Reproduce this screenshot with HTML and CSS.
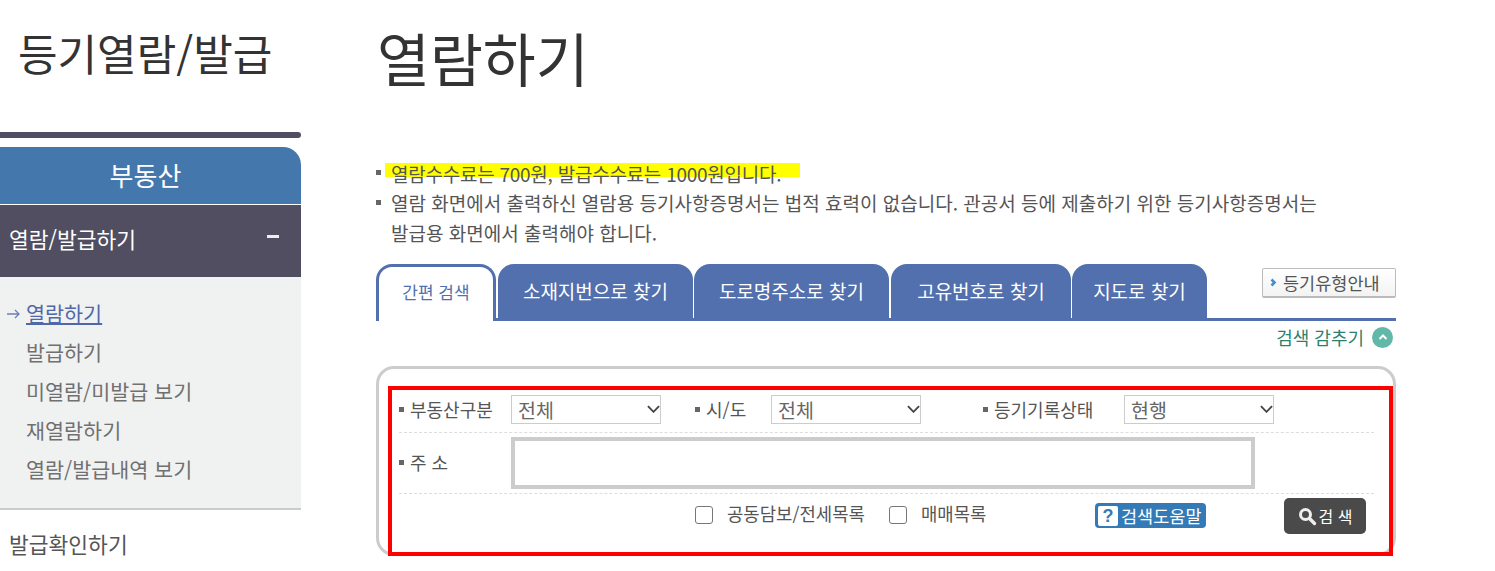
FILE: index.html
```html
<!DOCTYPE html>
<html lang="ko">
<head>
<meta charset="utf-8">
<title>열람하기</title>
<link rel="stylesheet" href="styles.css">
</head>
<body>
<div class="page">
  <aside class="side">
    <h2 class="side-title">등기열람/발급</h2>
    <div class="side-bar"></div>
    <div class="side-head">부동산</div>
    <div class="side-open"><span>열람/발급하기</span><i class="minus"></i></div>
    <ul class="side-sub">
      <li class="on">
        <svg class="arrow" width="14" height="10" viewBox="0 0 14 10"><path d="M0 5h12M8 1l4 4-4 4" fill="none" stroke="#6d7fb5" stroke-width="1.3"/></svg>
        <a>열람하기</a>
      </li>
      <li><a>발급하기</a></li>
      <li><a>미열람/미발급 보기</a></li>
      <li><a>재열람하기</a></li>
      <li><a>열람/발급내역 보기</a></li>
    </ul>
    <div class="side-next">발급확인하기</div>
  </aside>
  <main class="main">
    <h1 class="title">열람하기</h1>
    <ul class="notes">
      <li class="hl"><span class="marker"></span>열람수수료는 700원, 발급수수료는 1000원입니다.</li>
      <li>열람 화면에서 출력하신 열람용 등기사항증명서는 법적 효력이 없습니다. 관공서 등에 제출하기 위한 등기사항증명서는<br>발급용 화면에서 출력해야 합니다.</li>
    </ul>
    <div class="tabs">
      <a class="tab first">간편 검색</a>
      <a class="tab t2">소재지번으로 찾기</a>
      <a class="tab t3">도로명주소로 찾기</a>
      <a class="tab t4">고유번호로 찾기</a>
      <a class="tab t5">지도로 찾기</a>
      <a class="guide"><svg width="7" height="9" viewBox="0 0 7 9"><path d="M1.500 1.500l3 3-3 3" fill="none" stroke="#3f8fd0" stroke-width="2.600"/></svg>등기유형안내</a>
    </div>
    <div class="hide-row">검색 감추기<span class="circle"><svg width="10" height="6" viewBox="0 0 10 6"><path d="M1.5 5L5 1.5 8.500 5" fill="none" stroke="#fff" stroke-width="2"/></svg></span></div>
    <section class="box">
      <div class="annot"></div>
      <div class="row r1">
        <label class="lab l1">부동산구분</label>
        <div class="sel s1">전체<svg width="14" height="8" viewBox="0 0 14 8"><path d="M1 1l6 6 6-6" fill="none" stroke="#444" stroke-width="2"/></svg></div>
        <label class="lab l2">시/도</label>
        <div class="sel s2">전체<svg width="14" height="8" viewBox="0 0 14 8"><path d="M1 1l6 6 6-6" fill="none" stroke="#444" stroke-width="2"/></svg></div>
        <label class="lab l3">등기기록상태</label>
        <div class="sel s3">현행<svg width="14" height="8" viewBox="0 0 14 8"><path d="M1 1l6 6 6-6" fill="none" stroke="#444" stroke-width="2"/></svg></div>
      </div>
      <div class="row r2">
        <label class="lab l1 addr">주 소</label>
        <div class="addr-input"></div>
      </div>
      <div class="r3">
        <span class="chk c1"></span><span class="chk-t t1">공동담보/전세목록</span>
        <span class="chk c2"></span><span class="chk-t t2x">매매목록</span>
        <a class="help"><span class="q">?</span>검색도움말</a>
        <a class="go"><svg width="19" height="19" viewBox="0 0 19 19"><circle cx="7.500" cy="7.500" r="5" fill="none" stroke="#eee" stroke-width="3"/><path d="M11.500 11.500l5 5" stroke="#eee" stroke-width="3.400" stroke-linecap="round"/></svg>검 색</a>
      </div>
    </section>
  </main>
</div>
</body>
</html>
```
FILE: styles.css
```css
* { box-sizing: border-box; }
html, body { margin: 0; padding: 0; background: #fff; }
body {
  font-family: "Noto Sans CJK KR", "Noto Sans", sans-serif;
  color: #555;
  overflow: hidden;
}
a { text-decoration: none; }
ul { list-style: none; margin: 0; padding: 0; }
.page { display: flex; width: 1495px; height: 571px; overflow: hidden; }

.side { width: 301px; flex: none; }
.side-title {
  margin: 0; height: 132px; padding: 22px 0 0 18px;
  font-size: 43px; line-height: 60px; font-weight: 400; color: #333;
  letter-spacing: 0; white-space: nowrap;
}
.side-bar { height: 6px; background: #504e60; border-radius: 0 3px 3px 0; }
.side-head {
  margin-top: 9px; height: 57px; padding-right: 10px; background: #4478ad; border-top-right-radius: 18px;
  color: #fff; font-size: 26px; line-height: 55px; text-align: center;
}
.side-open {
  margin-top: 1px; height: 72px; background: #504e60; color: #fff;
  display: flex; align-items: center; justify-content: space-between;
  padding: 0 22px 0 9px; font-size: 21.500px; font-weight: 400;
}
.side-open span { margin-top: -6px; }
.minus { display: block; width: 12px; height: 3px; background: #eee; margin-top: -10px; }
.side-sub { height: 233px; padding-top: 17px; background: #f0f2f2; border-bottom: 2px solid #ccc; font-size: 20.700px; }
.side-sub li { position: relative; height: 39px; line-height: 39px; padding-left: 26px; white-space: nowrap; }
.side-sub a { color: #707070; }
.side-sub .on a { color: #5068a8; text-decoration: underline; text-decoration-thickness: 2px; text-underline-offset: 1px; }
.arrow { position: absolute; left: 7px; top: 15px; }
.side-next { padding: 13px 0 0 9px; font-size: 21.500px; line-height: 42px; color: #555; }

.main { width: 1020px; margin-left: 75px; flex: none; }
.title {
  margin: 0; height: 163px; padding: 19px 0 0 1px;
  font-size: 57.500px; line-height: 76px; font-weight: 400; color: #333;
}
.notes { font-size: 19px; line-height: 30px; color: #555; height: 101px; }
.notes li { position: relative; padding-left: 15px; white-space: nowrap; }
.notes li::before {
  content: ""; position: absolute; left: 0; top: 12px; width: 5px; height: 5px; background: #666;
}
.notes .hl { z-index: 0; height: 25px; line-height: 21px; letter-spacing: -0.250px; }
.notes .hl::before { top: 7px; }
.marker { position: absolute; z-index: -1; left: 9px; top: 0; width: 415px; height: 14px; background: #ff0; }

.tabs { position: relative; display: flex; height: 57px; border-bottom: 3px solid #526fae; }
.tab {
  display: block; height: 54px; background: #526fae; color: #fff; text-align: center;
  font-size: 19px; line-height: 54px; border-radius: 16px 16px 0 0; white-space: nowrap;
}
.tab.first {
  width: 120px; height: 57px; margin-right: 2px; background: #fff; color: #526fae; font-size: 17px;
  border: 3px solid #526fae; border-bottom: 0; line-height: 50px;
}
.t2 { width: 195px; margin-right: 1px; }
.t3 { width: 195px; margin-right: 2px; }
.t4 { width: 180px; margin-right: 1px; }
.t5 { width: 135px; }
.guide {
  display: flex; align-items: center; gap: 6px; position: absolute; right: 0; top: 4px;
  width: 134px; height: 30px; padding-left: 7px; font-size: 17.500px; color: #555; white-space: nowrap;
  background: linear-gradient(#fff, #f3f3f3); border: 1px solid #bbb; border-bottom-width: 2px; border-radius: 2px;
}
.hide-row {
  display: flex; justify-content: flex-end; align-items: center; gap: 8px;
  height: 45px; padding: 0 3px 13px 0; font-size: 18px; color: #2f7f6e;
}
.circle { display: flex; align-items: center; justify-content: center; width: 21px; height: 21px; border-radius: 50%; background: #62b8a8; }

.box {
  position: relative; width: 1020px; height: 190px; padding: 24px 19px 0 20px;
  border: 3px solid #ccc; border-radius: 18px; font-size: 18px;
}
.annot { position: absolute; left: 9px; top: 17px; width: 1005px; height: 170px; border: 4px solid #f00; pointer-events: none; }
.row { position: relative; display: flex; align-items: center; border-bottom: 1px dashed #ddd; }
.r1 { height: 40px; padding-bottom: 7px; }
.r2 { height: 61px; }
.lab { position: relative; padding-left: 11px; color: #555; white-space: nowrap; flex: none; }
.lab::before { content: ""; position: absolute; left: 0; top: 50%; margin-top: -2px; width: 5px; height: 5px; background: #666; }
.lab.addr { margin-top: -2px; }
.l1 { width: 112px; }
.l2 { width: 76px; margin-left: 34px; }
.l3 { width: 141px; margin-left: 62px; }
.sel {
  display: flex; align-items: center; justify-content: space-between; flex: none;
  width: 150px; height: 29px; padding: 0 0 0 6px; border: 1px solid #ccc; color: #666; font-size: 19.500px;
}
.sel svg { width: 13px; }
.addr-input { width: 744px; height: 52px; border: 4px solid #ccc; background: #fff; }
.r3 { position: relative; display: flex; align-items: center; height: 45px; padding: 0 0 4px 296px; font-size: 17.800px; color: #555; }
.chk { flex: none; width: 18px; height: 18px; border: 1.500px solid #777; border-radius: 3px; background: #fff; }
.chk-t { white-space: nowrap; margin-top: -3px; }
.t1 { margin-left: 14px; width: 162px; }
.t2x { margin-left: 14px; }
.help {
  display: flex; align-items: center; gap: 3px; position: absolute; left: 696px; top: 9px;
  width: 111px; height: 25px; padding-left: 3px; background: #337ab7; border-radius: 4px; color: #fff; font-size: 17.500px; white-space: nowrap;
}
.q { display: block; width: 20px; height: 20px; background: #fff; color: #337ab7; font: 700 18px/20px "Liberation Sans", sans-serif; text-align: center; border-radius: 2px; }
.go {
  display: flex; align-items: center; justify-content: center; gap: 2px; position: absolute; left: 885px; top: 4px;
  width: 82px; height: 36px; background: #4a4a4a; border-radius: 5px; color: #fff; font-size: 16px; white-space: nowrap;
}
```
